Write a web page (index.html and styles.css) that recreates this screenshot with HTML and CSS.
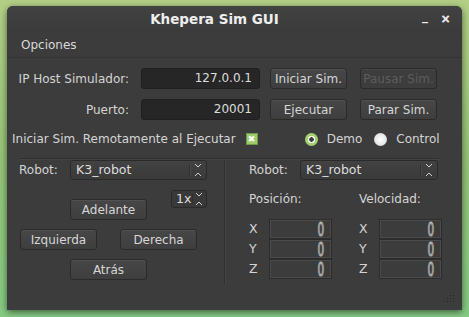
FILE: index.html
```html
<!DOCTYPE html>
<html lang="es">
<head>
    <meta charset="UTF-8">
    <meta name="viewport" content="width=device-width, initial-scale=1.0">
    <title>Khepera Sim GUI</title>
    <link rel="stylesheet" href="styles.css">
</head>
<body>

    <div class="window">
        <!-- title bar -->
        <div class="titlebar">
            <span class="title">Khepera Sim GUI</span>
            <span class="controls"><span class="min">_</span><span class="close">&#x2715;</span></span>
        </div>

        <div class="menubar"><span>Opciones</span></div>

        <div class="content">
            <div class="row row-ip">
                <span class="lbl">IP Host Simulador:</span>
                <div class="field">127.0.0.1</div>
                <button class="btn first">Iniciar Sim.</button>
                <button class="btn second" disabled>Pausar Sim.</button>
            </div>
            <div class="row row-port">
                <span class="lbl">Puerto:</span>
                <div class="field">20001</div>
                <button class="btn first">Ejecutar</button>
                <button class="btn second">Parar Sim.</button>
            </div>
            <div class="row row-opts">
                <span>Iniciar Sim. Remotamente al Ejecutar</span>
                <span class="check">&#x2716;</span>
                <span class="radio on"></span><span class="radio-lbl">Demo</span>
                <span class="radio"></span><span class="radio-lbl">Control</span>
            </div>

            <div class="hsep"></div>

            <div class="lower">
                <!-- left: manual control -->
                <div class="left">
                    <div class="robot-row">
                        <span class="robot-lbl">Robot:</span>
                        <div class="combo">K3_robot<span class="arrows"></span></div>
                    </div>
                    <div class="fwd-row">
                        <button class="btn dir adelante">Adelante</button>
                        <div class="spin">1x<span class="arrows"></span></div>
                    </div>
                    <div class="side-row">
                        <button class="btn dir izq">Izquierda</button>
                        <button class="btn dir der">Derecha</button>
                    </div>
                    <div class="back-row">
                        <button class="btn dir atras">Atrás</button>
                    </div>
                </div>

                <div class="vsep"></div>

                <!-- right: robot state -->
                <div class="right">
                    <div class="robot-row">
                        <span class="robot-lbl">Robot:</span>
                        <div class="combo">K3_robot<span class="arrows"></span></div>
                    </div>
                    <div class="state-head">
                        <span>Posición:</span>
                        <span>Velocidad:</span>
                    </div>
                    <div class="lcd-grid">
                        <span class="axis">X</span><div class="lcd"><span>0</span></div>
                        <span class="axis">X</span><div class="lcd"><span>0</span></div>
                        <span class="axis">Y</span><div class="lcd"><span>0</span></div>
                        <span class="axis">Y</span><div class="lcd"><span>0</span></div>
                        <span class="axis">Z</span><div class="lcd"><span>0</span></div>
                        <span class="axis">Z</span><div class="lcd"><span>0</span></div>
                    </div>
                </div>
            </div>
        </div>

        <svg class="grip" width="12" height="12" viewBox="0 0 12 12">
            <g fill="#262626">
                <rect x="10" y="1" width="1" height="1"/>
                <rect x="7" y="4" width="1" height="1"/><rect x="10" y="4" width="1" height="1"/>
                <rect x="4" y="7" width="1" height="1"/><rect x="7" y="7" width="1" height="1"/><rect x="10" y="7" width="1" height="1"/>
                <rect x="1" y="10" width="1" height="1"/><rect x="4" y="10" width="1" height="1"/><rect x="7" y="10" width="1" height="1"/><rect x="10" y="10" width="1" height="1"/>
            </g>
        </svg>
    </div>

</body>
</html>
```

FILE: styles.css
```css
body {
    margin: 0;
    padding: 6px 7px;
    height: 317px;
    box-sizing: border-box;
    overflow: hidden;
    background: linear-gradient(to bottom, #b3cf86 0%, #97c478 50%, #86cb84 100%);
    font-family: "DejaVu Sans", sans-serif;
    font-size: 12px;
    color: #d4d4d4;
}

.window {
    position: relative;
    width: 455px;
    height: 304px;
    background-color: #3c3c3c;
    border-radius: 6px 6px 0 0;
    box-shadow: 0 2px 7px rgba(0, 0, 0, 0.55);
}

.titlebar {
    display: flex;
    align-items: center;
    height: 26px;
    background: linear-gradient(to bottom, #424242, #3b3b3b);
    border-radius: 6px 6px 0 0;
}

.title {
    flex: 1;
    text-align: center;
    font-weight: bold;
    font-size: 13.5px;
    color: #eeeeee;
}

.controls {
    display: flex;
    width: 40px;
    gap: 13px;
    font-weight: bold;
    color: #eeeeee;
    font-size: 12px;
}

.controls .min {
    margin-top: -4px;
}

.controls .close {
    font-size: 11px;
    -webkit-text-stroke: 0.6px #eeeeee;
}

.menubar {
    height: 25px;
    display: flex;
    align-items: center;
    padding-left: 14px;
    border-bottom: 1px solid #333333;
    color: #dadada;
}

.content {
    padding-top: 10px;
}

.row {
    display: flex;
    align-items: center;
    height: 21px;
}

.row-port {
    margin-top: 10px;
}

.lbl {
    width: 122px;
    text-align: right;
}

.field {
    width: 119px;
    height: 21px;
    box-sizing: border-box;
    margin-left: 12px;
    padding-right: 7px;
    line-height: 19px;
    text-align: right;
    background-color: #262626;
    border: 1px solid #1f1f1f;
    border-radius: 3px;
    color: #dddddd;
}

.btn {
    height: 21px;
    width: 77px;
    padding: 0;
    font-family: "DejaVu Sans", sans-serif;
    font-size: 12px;
    color: #d6d6d6;
    background: linear-gradient(to bottom, #474747, #3e3e3e);
    border: 1px solid #2a2a2a;
    border-radius: 3px;
    box-shadow: inset 0 1px 0 rgba(255, 255, 255, 0.06);
}

.btn:disabled {
    color: #5c5c5c;
    background: #3d3d3d;
}

.btn.first {
    margin-left: 10px;
}

.btn.second {
    margin-left: 13px;
}

.row-opts {
    margin-top: 11px;
    height: 16px;
    padding-left: 5px;
}

.check {
    width: 12px;
    height: 12px;
    margin-left: 10px;
    box-sizing: border-box;
    border: 1px solid #6f9a47;
    background-color: #9ccc6a;
    color: #ffffff;
    font-size: 9px;
    line-height: 10px;
    text-align: center;
}

.radio {
    width: 13px;
    height: 13px;
    box-sizing: border-box;
    border-radius: 50%;
    background: radial-gradient(circle, #ffffff 0%, #e6e6e6 60%, #bbbbbb 100%);
    margin-left: 12px;
}

.radio.on {
    margin-left: 47px;
    background: radial-gradient(circle, #3c3c3c 0 2px, #f2f2f2 2.5px 3.5px, #a3d06f 4px);
}

.radio-lbl {
    margin-left: 9px;
}

.hsep {
    height: 1px;
    width: 420px;
    margin: 11px 0 0 12px;
    background-color: #303030;
    border-bottom: 1px solid #444444;
}

.lower {
    display: flex;
    height: 125px;
}

.left {
    width: 217px;
    flex-shrink: 0;
}

.vsep {
    width: 1px;
    flex-shrink: 0;
    background-color: #303030;
    border-right: 1px solid #444444;
}

.right {
    flex: 1;
    padding-left: 23px;
}

.robot-row {
    display: flex;
    align-items: center;
    height: 20px;
    padding-left: 12px;
}

.right .robot-row {
    padding-left: 0;
}

.robot-lbl {
    width: 51px;
}

.combo {
    position: relative;
    width: 137px;
    height: 20px;
    box-sizing: border-box;
    padding-left: 5px;
    line-height: 18px;
    font-size: 12.5px;
    color: #dddddd;
    background: linear-gradient(to bottom, #424242, #3a3a3a);
    border: 1px solid #2a2a2a;
    border-radius: 3px;
}

.arrows {
    position: absolute;
    right: 5px;
    top: 3px;
    width: 6px;
    height: 12px;
    background:
        linear-gradient(45deg, transparent 45%, #cfcfcf 45% 62%, transparent 62%) 0 0 / 3px 3px no-repeat,
        linear-gradient(-45deg, transparent 45%, #cfcfcf 45% 62%, transparent 62%) 3px 0 / 3px 3px no-repeat,
        linear-gradient(-45deg, transparent 38%, #cfcfcf 38% 55%, transparent 55%) 0 9px / 3px 3px no-repeat,
        linear-gradient(45deg, transparent 38%, #cfcfcf 38% 55%, transparent 55%) 3px 9px / 3px 3px no-repeat;
}

.arrows::before {
    content: "";
    position: absolute;
    left: -6px;
    top: 1px;
    height: 10px;
    border-left: 1px solid #2e2e2e;
    border-right: 1px solid #4a4a4a;
}

.right .combo {
    width: 138px;
}

.fwd-row {
    display: flex;
    align-items: flex-start;
    margin-top: 10px;
    height: 30px;
    padding-left: 63px;
}

.btn.adelante {
    margin-top: 9px;
}

.spin {
    position: relative;
    width: 36px;
    height: 18px;
    margin-left: 24px;
    box-sizing: border-box;
    padding-left: 4px;
    line-height: 16px;
    font-size: 12.5px;
    color: #dddddd;
    background-color: #393939;
    border: 1px solid #2a2a2a;
    border-radius: 3px;
}

.spin .arrows {
    top: 2px;
    right: 4px;
}

.spin .arrows::before {
    left: -4px;
    border-right: none;
}

.side-row {
    display: flex;
    margin-top: 9px;
    padding-left: 13px;
    gap: 23px;
}

.back-row {
    padding-left: 63px;
    margin-top: 9px;
}

.state-head {
    display: flex;
    margin-top: 11px;
    height: 16px;
    line-height: 16px;
}

.state-head span {
    width: 110px;
}

.lcd-grid {
    display: grid;
    grid-template-columns: 20px 63px 47px 63px;
    margin-top: 12px;
}

.axis {
    line-height: 20px;
    font-size: 12.5px;
}

.lcd-grid .axis:nth-child(4n+3) {
    padding-left: 27px;
}

.lcd {
    height: 20px;
    box-sizing: border-box;
    border: 1px solid #2c2c2c;
    box-shadow: inset 0 0 0 1px #4b4b4b;
    text-align: right;
    padding-right: 7px;
}

.lcd span {
    display: inline-block;
    font-family: "DejaVu Sans", sans-serif;
    font-size: 19px;
    line-height: 18px;
    color: transparent;
    -webkit-text-stroke: 1px #cfcfcf;
    transform: scaleX(0.55);
    transform-origin: right center;
}

.grip {
    position: absolute;
    right: 7px;
    bottom: 7px;
}
```
